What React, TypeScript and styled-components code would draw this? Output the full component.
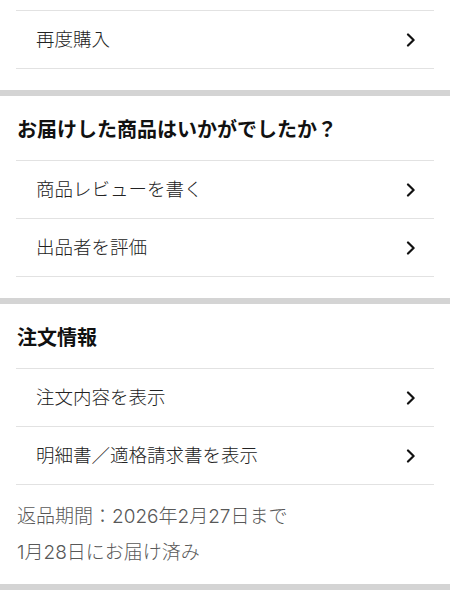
import styled, { createGlobalStyle } from "styled-components";

const GlobalStyle = createGlobalStyle`
  html, body {
    margin: 0;
    padding: 0;
    background: #ffffff;
  }
  body {
    font-family: "Noto Sans CJK JP", "Noto Sans", sans-serif;
    -webkit-font-smoothing: antialiased;
  }
`;

const Page = styled.div`
  width: 450px;
  background: #ffffff;
`;

const Section = styled.section<{ $top?: number; $bottom?: number }>`
  padding-top: ${(p) => p.$top ?? 0}px;
  padding-bottom: ${(p) => p.$bottom ?? 0}px;
`;

const Band = styled.div`
  height: 6px;
  background: #d4d4d4;
`;

const Heading = styled.h2`
  margin: 0;
  height: 64px;
  padding: 0 17px;
  box-sizing: border-box;
  display: flex;
  align-items: center;
  font-size: 20px;
  font-weight: 700;
  color: #111111;
`;

const List = styled.ul`
  list-style: none;
  margin: 0 16px;
  padding: 0;
  border-top: 1px solid #e2e2e2;
`;

const Row = styled.li`
  height: 58px;
  box-sizing: border-box;
  border-bottom: 1px solid #e2e2e2;
  display: flex;
  align-items: center;
  justify-content: space-between;
  padding: 0 18px 0 20px;
  font-size: 18.5px;
  font-weight: 300;
  color: #222222;
`;

const Label = styled.span`
  line-height: 24px;
  padding-bottom: 4px;
`;

const Chevron = styled.svg`
  width: 10px;
  height: 14px;
  flex-shrink: 0;
`;

const Notes = styled.div`
  padding: 14px 17px 13px;
`;

const Note = styled.p`
  margin: 0;
  line-height: 36px;
  font-family: "Inter", "Noto Sans CJK JP", sans-serif;
  font-size: 19px;
  font-weight: 300;
  color: #585858;
`;

function ChevronRight() {
  return (
    <Chevron viewBox="0 0 10 14">
      <path
        d="M2 1.5 L7.6 7 L2 12.5"
        fill="none"
        stroke="#111111"
        strokeWidth="2.2"
        strokeLinecap="round"
        strokeLinejoin="round"
      />
    </Chevron>
  );
}

function LinkRow({ label }: { label: string }) {
  return (
    <Row>
      <Label>{label}</Label>
      <ChevronRight />
    </Row>
  );
}

export default function App() {
  return (
    <Page>
      <GlobalStyle />
      <Section $top={10} $bottom={21}>
        <List>
          <LinkRow label="再度購入" />
        </List>
      </Section>
      <Band />
      <Section $bottom={21}>
        <Heading>お届けした商品はいかがでしたか？</Heading>
        <List>
          <LinkRow label="商品レビューを書く" />
          <LinkRow label="出品者を評価" />
        </List>
      </Section>
      <Band />
      <Section>
        <Heading>注文情報</Heading>
        <List>
          <LinkRow label="注文内容を表示" />
          <LinkRow label="明細書／適格請求書を表示" />
        </List>
        <Notes>
          <Note>返品期間：2026年2月27日まで</Note>
          <Note>1月28日にお届け済み</Note>
        </Notes>
      </Section>
      <Band />
    </Page>
  );
}
